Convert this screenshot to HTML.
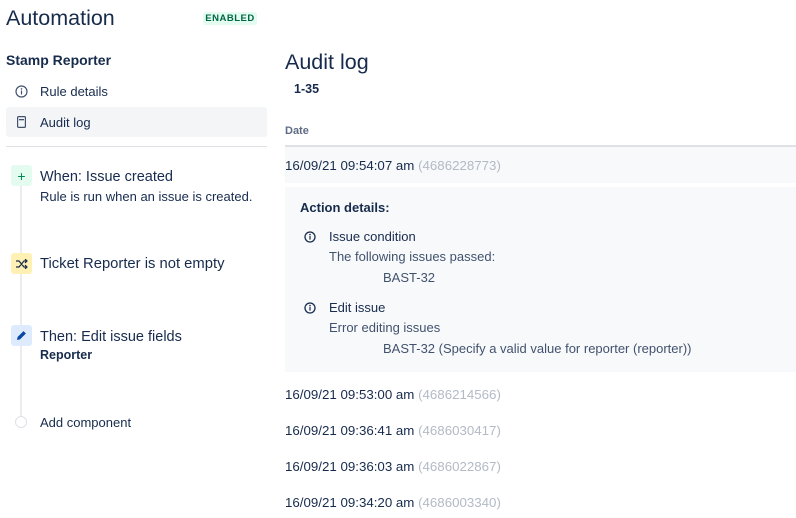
<!DOCTYPE html><html><head><style>
body{margin:0;width:796px;height:518px;background:#fff;font-family:"Liberation Sans",sans-serif;color:#172b4d;position:relative;overflow:hidden}
.a{position:absolute;white-space:nowrap}
.ic{position:absolute;left:11px;width:21px;height:21px;border-radius:3px;display:flex;align-items:center;justify-content:center}
.g{color:#b3bac5}
.row{position:absolute;left:285px;font-size:13.3px}
</style></head><body>
<div class="a" style="left:6px;top:6px;font-size:21.5px;color:#172b4d">Automation</div>
<div class="a" style="left:203px;top:12px;width:54px;height:13px;background:#e3fcef;color:#006644;font-size:9.5px;font-weight:bold;text-align:center;line-height:13px;border-radius:3px;letter-spacing:.5px">ENABLED</div>
<div class="a" style="left:6px;top:52px;font-size:14px;font-weight:bold">Stamp Reporter</div>
<svg class="a" style="left:15px;top:85px" width="13" height="13" viewBox="0 0 13 13"><circle cx="6.5" cy="6.5" r="5.5" fill="none" stroke="#42526e" stroke-width="1.2"/><rect x="5.9" y="5.5" width="1.2" height="4" fill="#42526e"/><circle cx="6.5" cy="3.9" r=".8" fill="#42526e"/></svg>
<div class="a" style="left:40px;top:84px;font-size:13px">Rule details</div>
<div class="a" style="left:6px;top:107px;width:261px;height:30px;background:#f4f5f7;border-radius:3px"></div>
<svg class="a" style="left:17px;top:116px" width="9" height="12" viewBox="0 0 9 12"><rect x=".6" y=".6" width="7.8" height="10.8" rx="1" fill="none" stroke="#42526e" stroke-width="1.2"/><rect x="2" y="3" width="5" height="1.3" fill="#42526e"/></svg>
<div class="a" style="left:40px;top:115px;font-size:13px">Audit log</div>
<div class="a" style="left:6px;top:146px;width:261px;height:1px;background:#dfe1e6"></div>
<div class="a" style="left:20px;top:186px;width:2px;height:234px;background:#ebecf0"></div>
<div class="ic" style="top:165px;background:#e3fcef;color:#00875a;font-size:14px">+</div>
<div class="a" style="left:40px;top:169px;font-size:14.5px">When: Issue created</div>
<div class="a" style="left:40px;top:189px;font-size:13px">Rule is run when an issue is created.</div>
<div class="ic" style="top:253px;background:#fff0b3"><svg width="12" height="10" viewBox="0 0 12 10"><path d="M0 2h3l5 6h3M0 8h3l5-6h3M9 0l2 2-2 2M9 6l2 2-2 2" fill="none" stroke="#172b4d" stroke-width="1.2"/></svg></div>
<div class="a" style="left:40px;top:256px;font-size:14.8px">Ticket Reporter is not empty</div>
<div class="ic" style="top:325px;background:#deebff"><svg width="11" height="11" viewBox="0 0 11 11"><path d="M1 10l.6-3L7.5 1.1l2.4 2.4L4 9.4z" fill="#0747a6"/></svg></div>
<div class="a" style="left:40px;top:329px;font-size:14.5px">Then: Edit issue fields</div>
<div class="a" style="left:40px;top:348px;font-size:12.5px;font-weight:bold">Reporter</div>
<div class="a" style="left:15px;top:416px;width:10px;height:10px;border:1px solid #dfe1e6;border-radius:50%;background:#fff"></div>
<div class="a" style="left:40px;top:415px;font-size:13px">Add component</div>

<div class="a" style="left:285px;top:50px;font-size:21.5px">Audit log</div>
<div class="a" style="left:294px;top:82px;font-size:12.5px;font-weight:bold">1-35</div>
<div class="a" style="left:285px;top:125px;font-size:11px;font-weight:bold;color:#5e6c84">Date</div>
<div class="a" style="left:285px;top:145px;width:511px;height:2px;background:#dfe1e6"></div>
<div class="a" style="left:285px;top:147px;width:511px;height:36px;background:#f8f9fa"></div>
<div class="row" style="top:158px">16/09/21 09:54:07 am <span class="g">(4686228773)</span></div>
<div class="a" style="left:285px;top:187px;width:511px;height:185px;background:#f8f9fb"></div>
<div class="a" style="left:300px;top:200px;font-size:13px;font-weight:bold">Action details:</div>
<svg class="a" style="left:304px;top:231px" width="12" height="12" viewBox="0 0 12 12"><circle cx="6" cy="6" r="5" fill="none" stroke="#172b4d" stroke-width="1.3"/><rect x="5.4" y="5" width="1.2" height="3.6" fill="#172b4d"/><circle cx="6" cy="3.6" r=".8" fill="#172b4d"/></svg>
<div class="a" style="left:329px;top:229px;font-size:13px">Issue condition</div>
<div class="a" style="left:329px;top:249px;font-size:13px;color:#42526e">The following issues passed:</div>
<div class="a" style="left:383px;top:270px;font-size:13px;color:#42526e">BAST-32</div>
<svg class="a" style="left:304px;top:302px" width="12" height="12" viewBox="0 0 12 12"><circle cx="6" cy="6" r="5" fill="none" stroke="#172b4d" stroke-width="1.3"/><rect x="5.4" y="5" width="1.2" height="3.6" fill="#172b4d"/><circle cx="6" cy="3.6" r=".8" fill="#172b4d"/></svg>
<div class="a" style="left:329px;top:300px;font-size:13px">Edit issue</div>
<div class="a" style="left:329px;top:320px;font-size:13px;color:#42526e">Error editing issues</div>
<div class="a" style="left:383px;top:341px;font-size:13px;color:#42526e">BAST-32 (Specify a valid value for reporter (reporter))</div>
<div class="row" style="top:387px">16/09/21 09:53:00 am <span class="g">(4686214566)</span></div>
<div class="row" style="top:423px">16/09/21 09:36:41 am <span class="g">(4686030417)</span></div>
<div class="row" style="top:459px">16/09/21 09:36:03 am <span class="g">(4686022867)</span></div>
<div class="row" style="top:495px">16/09/21 09:34:20 am <span class="g">(4686003340)</span></div>
</body></html>
